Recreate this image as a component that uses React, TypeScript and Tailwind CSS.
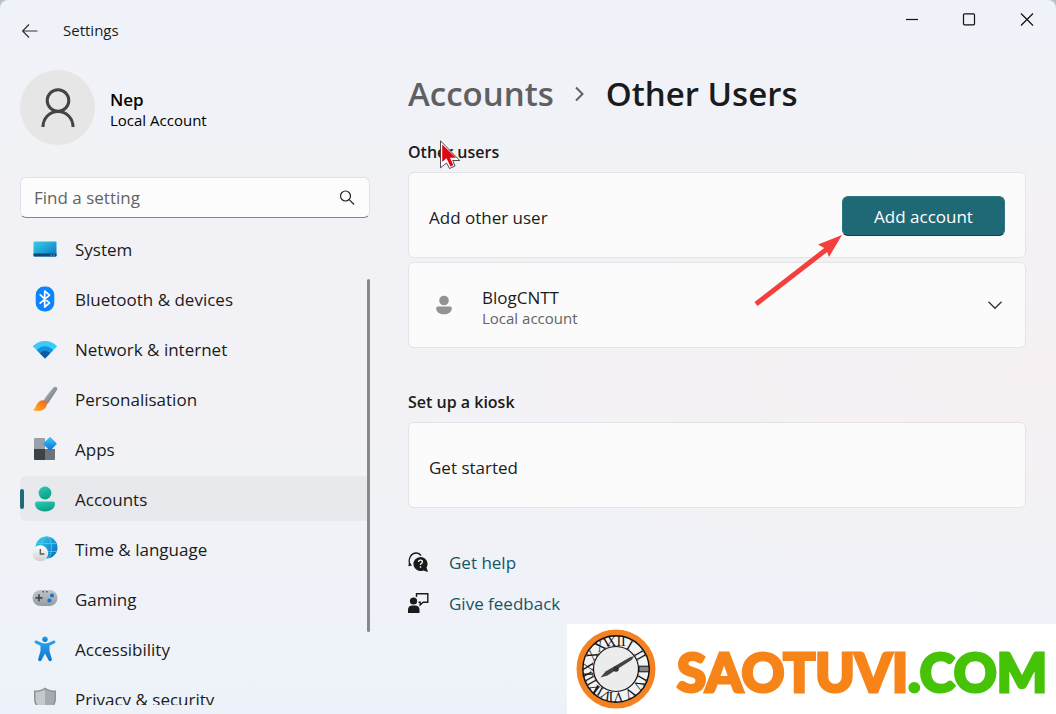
import type { ReactNode } from "react";

function SystemIcon() {
  return (
    <svg viewBox="0 0 26 26" className="size-6.5">
      <defs>
        <linearGradient id="sys" x1="0" y1="0" x2="1" y2="1">
          <stop offset="0" stopColor="#35d0e8" />
          <stop offset="1" stopColor="#0b74c4" />
        </linearGradient>
      </defs>
      <rect x="1.5" y="5.5" width="23" height="15" rx="1" fill="url(#sys)" />
      <path d="M1.500 17.500h23v2a1 1 0 0 1-1 1h-21a1 1 0 0 1-1-1z" fill="#0b4a74" />
      <path d="M18.500 18.500h1.200v1h-1.200zM21.200 18.500h1.200v1h-1.200z" fill="#8fd8f5" />
    </svg>
  );
}

function BluetoothIcon() {
  return (
    <svg viewBox="0 0 26 26" className="size-6.5">
      <rect x="3.700" y="0.500" width="18.600" height="25" rx="8.500" fill="#0a84ff" />
      <path d="M8.200 8.800l9.300 8-4.800 4.200V5l4.800 4.200-9.300 8" fill="none" stroke="#fff" strokeWidth="1.700" strokeLinejoin="round" strokeLinecap="round" />
    </svg>
  );
}

function WifiIcon() {
  return (
    <svg viewBox="0 0 26 26" className="size-6.5">
      <path d="M0.800 10.300C7.500 3.200 18.500 3.200 25.200 10.300L13 22.500z" fill="#3ccbf4" />
      <path d="M4.800 14.200C9.500 9 16.500 9 21.200 14.200L13 22.500z" fill="#1490df" />
      <path d="M7.900 17.300c3-3.400 7.200-3.400 10.200 0L13 22.500z" fill="#0f5a9e" />
    </svg>
  );
}

function BrushIcon() {
  return (
    <svg viewBox="0 0 26 26" className="size-6.5">
      <defs>
        <linearGradient id="handle" x1="0" y1="0" x2="1" y2="1">
          <stop offset="0.200" stopColor="#b4bbc2" />
          <stop offset="0.900" stopColor="#5c646c" />
        </linearGradient>
        <linearGradient id="bristle" x1="0" y1="1" x2="1" y2="0">
          <stop offset="0" stopColor="#ffb62e" />
          <stop offset="0.500" stopColor="#fb8c1e" />
          <stop offset="1" stopColor="#ee5a16" />
        </linearGradient>
      </defs>
      <path d="M21.800 1.300c2-1.500 4.300.6 3.100 2.700L16 17.500c-.9 1.200-5.300-2.200-4.200-3.600C15 9.500 18 5 21.800 1.300z" fill="url(#handle)" />
      <path d="M7.600 15.200c4-2.900 8.800 1 6.800 5C12 25.500 4.200 26 .6 23.800c3.400-.4 2.700-5.800 7-8.600z" fill="url(#bristle)" />
    </svg>
  );
}

function AppsIcon() {
  return (
    <svg viewBox="0 0 26 26" className="size-6.5">
      <defs>
        <linearGradient id="tile" x1="0" y1="0" x2="1" y2="1">
          <stop offset="0" stopColor="#3ecbf6" />
          <stop offset="1" stopColor="#0a6fd8" />
        </linearGradient>
      </defs>
      <path d="M3 2h10v11H2V3a1 1 0 0 1 1-1z" fill="#9aa0a8" />
      <path d="M2 13h11v11H3a1 1 0 0 1-1-1z" fill="#3d4247" />
      <path d="M13 13h10v10a1 1 0 0 1-1 1h-9z" fill="#6d737b" />
      <rect x="13" y="2.800" width="10" height="10" rx="1" transform="rotate(45 18 7.800)" fill="url(#tile)" />
    </svg>
  );
}

function AccountsIcon() {
  return (
    <svg viewBox="0 0 26 26" className="size-6.5">
      <defs>
        <linearGradient id="acct" x1="0" y1="0" x2="0.400" y2="1">
          <stop offset="0" stopColor="#26cdb2" />
          <stop offset="1" stopColor="#129f89" />
        </linearGradient>
      </defs>
      <circle cx="13" cy="7" r="6.400" fill="url(#acct)" />
      <path d="M5 15.500h16a2 2 0 0 1 2 2c0 5.300-4.500 8-10 8s-10-2.700-10-8a2 2 0 0 1 2-2z" fill="url(#acct)" />
    </svg>
  );
}

function TimeIcon() {
  return (
    <svg viewBox="0 0 26 26" className="size-6.5">
      <defs>
        <linearGradient id="globe" x1="0" y1="0" x2="1" y2="1">
          <stop offset="0" stopColor="#32d3ee" />
          <stop offset="1" stopColor="#0868bd" />
        </linearGradient>
        <linearGradient id="dial" x1="0" y1="0" x2="0" y2="1">
          <stop offset="0" stopColor="#fff" />
          <stop offset="1" stopColor="#cfcfcf" />
        </linearGradient>
      </defs>
      <circle cx="14.500" cy="11.500" r="11" fill="url(#globe)" />
      <g fill="none" stroke="#4fcdec" strokeWidth="0.800">
        <ellipse cx="14.500" cy="11.500" rx="5" ry="11" />
        <path d="M4.500 7.500h20M4 15.500h21" />
      </g>
      <circle cx="8.300" cy="17.300" r="8" fill="url(#dial)" />
      <path d="M8.300 13v5h4" fill="none" stroke="#555" strokeWidth="1.300" />
    </svg>
  );
}

function GamingIcon() {
  return (
    <svg viewBox="0 0 26 26" className="size-6.5">
      <defs>
        <linearGradient id="pad" x1="0" y1="0" x2="0" y2="1">
          <stop offset="0" stopColor="#c2c6ca" />
          <stop offset="1" stopColor="#949ba3" />
        </linearGradient>
      </defs>
      <rect x="0.500" y="4" width="25" height="16" rx="8" fill="url(#pad)" />
      <path d="M7 8.300v7M3.500 11.800h7" stroke="#44484d" strokeWidth="1.700" />
      <circle cx="20" cy="9.500" r="2" fill="#1274d4" />
      <circle cx="17.400" cy="14.500" r="2" fill="#1274d4" />
      <path d="M10.500 5h1.400v1.400h-1.400zM14.200 5h1.400v1.400h-1.400z" fill="#4b4f54" />
    </svg>
  );
}

function AccessibilityIcon() {
  return (
    <svg viewBox="0 0 26 26" className="size-6.5">
      <defs>
        <linearGradient id="body" x1="0" y1="0" x2="0" y2="1">
          <stop offset="0" stopColor="#2aa5f0" />
          <stop offset="1" stopColor="#0a74cf" />
        </linearGradient>
      </defs>
      <circle cx="13" cy="3.200" r="2.700" fill="url(#body)" />
      <path d="M4.500 4.600l5 2.100c2.300.9 4.700.9 7 0l5-2.100c1.900-.6 2.600 1.900 1.100 2.700L17.500 9.700v5.200l2.300 8.200c.5 2.200-2.300 3-3.200 1.200L13 17.500l-3.600 6.800c-.9 1.800-3.700 1-3.200-1.200l2.300-8.200V9.700L3.400 7.300c-1.500-.8-.8-3.300 1.100-2.700z" fill="url(#body)" />
    </svg>
  );
}

function PrivacyIcon() {
  return (
    <svg viewBox="0 0 26 26" className="size-6.5">
      <path d="M13 1.500c3 2.400 7 3 11 3.100V13c0 6.500-5 10.500-11 12.500C7 23.500 2 19.500 2 13V4.600c4-.1 8-.7 11-3.100z" fill="#8c9299" />
      <path d="M13 3.300c2.700 1.900 6 2.600 9.500 2.800V13c0 5.500-4.500 9-9.500 10.800z" fill="#a5aab0" />
      <path d="M13 3.300C10.300 5.200 7 5.900 3.500 6.100V13c0 5.500 4.500 9 9.500 10.800z" fill="#c6c9cc" />
    </svg>
  );
}

const navItems: { label: string; icon: ReactNode; active?: boolean }[] = [
  { label: "System", icon: <SystemIcon /> },
  { label: "Bluetooth & devices", icon: <BluetoothIcon /> },
  { label: "Network & internet", icon: <WifiIcon /> },
  { label: "Personalisation", icon: <BrushIcon /> },
  { label: "Apps", icon: <AppsIcon /> },
  { label: "Accounts", icon: <AccountsIcon />, active: true },
  { label: "Time & language", icon: <TimeIcon /> },
  { label: "Gaming", icon: <GamingIcon /> },
  { label: "Accessibility", icon: <AccessibilityIcon /> },
  { label: "Privacy & security", icon: <PrivacyIcon /> },
];

function TitleBar() {
  return (
    <header className="flex h-15 shrink-0 items-start justify-between">
      <div className="flex h-15 items-center gap-[23px] pl-5">
        <button type="button" aria-label="Back" className="flex size-5 items-center justify-center">
          <svg viewBox="0 0 20 20" className="size-5" fill="none" stroke="#333" strokeWidth="1.200">
            <path d="M17.500 11H3M9 4.500L2.600 11 9 17.500" />
          </svg>
        </button>
        <span className="text-[15px]">Settings</span>
      </div>
      <div className="flex">
        <button type="button" aria-label="Minimise" className="flex h-10 w-14 items-center justify-center">
          <svg viewBox="0 0 14 14" className="size-3.5" stroke="#111" strokeWidth="1.200">
            <path d="M1 6.500h12" />
          </svg>
        </button>
        <button type="button" aria-label="Maximise" className="flex h-10 w-[58px] items-center justify-center">
          <svg viewBox="0 0 14 14" className="size-3.5" fill="none" stroke="#111" strokeWidth="1.200">
            <rect x="1.500" y="0.800" width="11" height="11" rx="1" />
          </svg>
        </button>
        <button type="button" aria-label="Close" className="flex h-10 w-[58px] items-center justify-center">
          <svg viewBox="0 0 14 14" className="size-3.5" stroke="#111" strokeWidth="1.200">
            <path d="M1 0.500l12 12M13 0.500l-12 12" />
          </svg>
        </button>
      </div>
    </header>
  );
}

function Sidebar() {
  return (
    <aside className="relative flex w-[350px] shrink-0 flex-col">
      <div className="mt-2.5 flex items-center gap-[15px]">
        <div className="flex size-[75px] items-center justify-center rounded-full bg-[#e6e6e6]">
          <svg viewBox="0 0 36 40" className="h-10 w-9" fill="none" stroke="#444" strokeWidth="3">
            <circle cx="18" cy="12.500" r="10.800" />
            <path d="M3 39c0-8.500 6.500-15.500 15-15.500S33 30.500 33 39" />
          </svg>
        </div>
        <div className="flex flex-col pt-1 text-black">
          <span className="text-[17px] leading-5 font-semibold">Nep</span>
          <span className="text-[15px] leading-5">Local Account</span>
        </div>
      </div>
      <div className="mt-8 flex h-[41px] shrink-0 items-center rounded-md border border-[#e1e2e6] border-b-[#86868a] bg-[#fcfcfd] pr-3 pl-[13px]">
        <input
          type="text"
          aria-label="Find a setting"
          placeholder="Find a setting"
          className="min-w-0 flex-1 bg-transparent text-[17px] outline-none placeholder:text-[#636363]"
        />
        <svg viewBox="0 0 20 20" className="size-5" fill="none" stroke="#222" strokeWidth="1.200">
          <circle cx="8.500" cy="8" r="5" />
          <path d="M12.200 11.700L17 16.500" />
        </svg>
      </div>
      <nav className="mt-2 mb-[9px] flex min-h-0 flex-1 flex-col gap-[5px] overflow-hidden">
        {navItems.map((item) => (
          <a
            key={item.label}
            href="#"
            className={
              item.active
                ? "flex h-[45px] shrink-0 items-center rounded-md bg-[#e8e9ec]"
                : "flex h-[45px] shrink-0 items-center rounded-md"
            }
          >
            <span className={item.active ? "h-5 w-1 rounded-full bg-[#1f6b78]" : "h-5 w-1"} />
            <span className="ml-2 flex size-6.5 items-center">{item.icon}</span>
            <span className="ml-[17px] pt-0.5 text-[17px]">{item.label}</span>
          </a>
        ))}
      </nav>
      <div className="absolute top-[219px] right-0 h-[353px] w-[3px] rounded-full bg-[#87888b]" />
    </aside>
  );
}

function Pointer() {
  return (
    <svg viewBox="0 0 20 29" className="h-[29px] w-5">
      <path d="M0.500 0.800v27L6.500 23l3 5.500 5.500-2.500-2.300-5.500H19.700z" fill="#fff" stroke="#222" strokeWidth="0.800" />
      <path d="M2.200 4.500v17.500l4.300-3.800 4 8.300 2.800-1.300-3.300-7.500h6z" fill="#e00612" />
    </svg>
  );
}

function AddArrow() {
  return (
    <svg viewBox="0 0 90 72" className="absolute top-[62px] right-[182px] h-[72px] w-[90px]">
      <path d="M3 69L74 14" stroke="#f43f3d" strokeWidth="5" />
      <path d="M89 0L65 9.500 73 14 76 22z" fill="#f43f3d" />
    </svg>
  );
}

function Main() {
  return (
    <main className="min-w-0 flex-1">
      <h1 className="flex h-17 items-center text-[33px] font-semibold">
        <span className="text-[#5f6062]">Accounts</span>
        <svg viewBox="0 0 14 18" className="mx-[19px] h-[18px] w-3.5" fill="none" stroke="#5f6062" strokeWidth="2">
          <path d="M3 2.500L9.500 9 3 15.500" />
        </svg>
        <span>Other Users</span>
      </h1>
      <div className="relative flex h-11 items-center pt-3 pb-2">
        <h2 className="text-base leading-6 font-semibold">Other users</h2>
        <div className="absolute top-3 left-8">
          <Pointer />
        </div>
      </div>
      <section className="flex flex-col gap-1">
        <div className="relative flex h-[86px] items-center justify-between rounded-md border border-[#e4e4e8] bg-[#fbfbfc] px-5 pt-0.5">
          <span className="pt-1 text-[17px]">Add other user</span>
          <button
            type="button"
            className="h-10 w-[163px] rounded-md border border-[#2f7683] border-b-[#123f48] bg-[#1f6977] pt-0.5 text-[17px] text-white"
          >
            Add account
          </button>
          <AddArrow />
        </div>
        <button
          type="button"
          className="flex h-[86px] items-center rounded-md border border-[#e4e4e8] bg-[#fbfbfc] px-5 text-left"
        >
          <span className="flex w-[53px] items-center pl-[7px]">
            <svg viewBox="0 0 16 20" className="h-5 w-4" fill="#939393">
              <circle cx="8" cy="5.500" r="4.800" />
              <path d="M1.500 11.500h13a1.400 1.400 0 0 1 1.300 1.400c0 4-3.300 6.300-7.800 6.300S.2 16.900.2 12.900a1.400 1.400 0 0 1 1.300-1.400z" />
            </svg>
          </span>
          <span className="flex flex-1 flex-col pt-1.5">
            <span className="text-[17px] leading-5">BlogCNTT</span>
            <span className="text-[15px] leading-5 text-[#636363]">Local account</span>
          </span>
          <svg viewBox="0 0 20 20" className="size-5" fill="none" stroke="#333" strokeWidth="1.300">
            <path d="M3.500 6.800l6.500 6.500 6.500-6.500" />
          </svg>
        </button>
      </section>
      <h2 className="mt-10 mb-2 flex h-[26px] items-center pt-0.5 text-base font-semibold">Set up a kiosk</h2>
      <div className="flex h-[86px] items-center rounded-md border border-[#e4e4e8] bg-[#fbfbfc] px-5 pt-0.5">
        <a href="#" className="pt-1 text-[17px]">Get started</a>
      </div>
      <div className="mt-[34px] flex flex-col text-[17px] text-[#175562]">
        <a href="#" className="flex h-[41px] items-center gap-5">
          <svg viewBox="0 0 21 21" className="size-[21px]">
            <path d="M1.800 12.500C-.3 6 3.500 1 8 1c2.200 0 4 1 5 2.700" fill="none" stroke="#1a1a1a" strokeWidth="1.300" />
            <path d="M.3 14.200l3.700-.8-2.800-3.400z" fill="#1a1a1a" />
            <path d="M12.500 5a7 7 0 0 1 6 10.600l1.500 4.400-4.700-1.600A7 7 0 1 1 12.500 5z" fill="#1a1a1a" />
            <path d="M10.500 10c.1-2.700 4.100-2.500 3.900 0-.1 1.300-1.900 1.500-1.900 3M12.500 14.300v1.500" fill="none" stroke="#fff" strokeWidth="1.300" />
          </svg>
          <span>Get help</span>
        </a>
        <a href="#" className="flex h-[41px] items-center gap-5">
          <svg viewBox="0 0 21 21" className="size-[21px]" fill="#1a1a1a">
            <circle cx="5.500" cy="8" r="3.600" />
            <path d="M0 20v-3.500C0 13.800 2 12.500 4 12.500h3c2.500 0 4.500 1.500 4.500 4V20z" />
            <path d="M8.500 4V0.700h11.300v8.600h-4.600l-3 2.700V9.300h-1.700" fill="none" stroke="#1a1a1a" strokeWidth="1.400" />
          </svg>
          <span>Give feedback</span>
        </a>
      </div>
    </main>
  );
}

const numerals = ["XII", "I", "II", "", "IV", "V", "VI", "VII", "VIII", "IX", "X", "XI"];

function ClockLogo() {
  return (
    <svg viewBox="-40 -40 80 80" className="size-20 shrink-0">
      <circle r="36.500" fill="#f3f3f3" stroke="#f58220" strokeWidth="6" />
      <circle r="33.200" fill="none" stroke="#111" strokeWidth="1.400" />
      <circle r="22.500" fill="#ececec" stroke="#111" strokeWidth="1.200" />
      <rect x="23" y="-2.800" width="10" height="5.600" fill="#888" stroke="#111" strokeWidth="1" />
      {numerals.map((n, i) => (
        <text
          key={i}
          y="-23"
          transform={`rotate(${i * 30})`}
          textAnchor="middle"
          fontFamily="Liberation Serif, serif"
          fontSize="14"
          fill="#111"
        >
          {n}
        </text>
      ))}
      <path d="M-15.500 8.500l5-6L14-11.800l4.300-1.200-2.500 3.700L-8.500 6.500z" fill="#444" />
      <circle r="2.800" fill="#333" />
    </svg>
  );
}

function Watermark() {
  return (
    <div className="absolute right-0 bottom-0 flex h-[90px] w-[489px] items-center gap-[21px] bg-white pl-[9px]">
      <ClockLogo />
      <span className="pt-1 font-['Lato'] text-[53px] leading-none font-black whitespace-nowrap text-[#f78418] [-webkit-text-stroke:3px_#f78418]">
        SAOTUVI<span className="text-[#46c307] [-webkit-text-stroke:3px_#46c307]">.COM</span>
      </span>
    </div>
  );
}

export default function App() {
  return (
    <div className="h-screen bg-[#b9bfc8]">
      <div className="relative flex h-screen flex-col overflow-hidden rounded-t-lg bg-[#f2f2f6] bg-[radial-gradient(ellipse_at_100%_52%,#f6f0f2,transparent_45%),linear-gradient(to_bottom,#eff3f9,#f2f2f6_25%,#f2f2f6_62%,#edf2fa)] font-['Open_Sans',sans-serif] text-[#1b1b1b]">
        <TitleBar />
        <div className="flex min-h-0 flex-1 gap-[38px] pr-[30px] pl-5">
          <Sidebar />
          <Main />
        </div>
        <Watermark />
      </div>
    </div>
  );
}
